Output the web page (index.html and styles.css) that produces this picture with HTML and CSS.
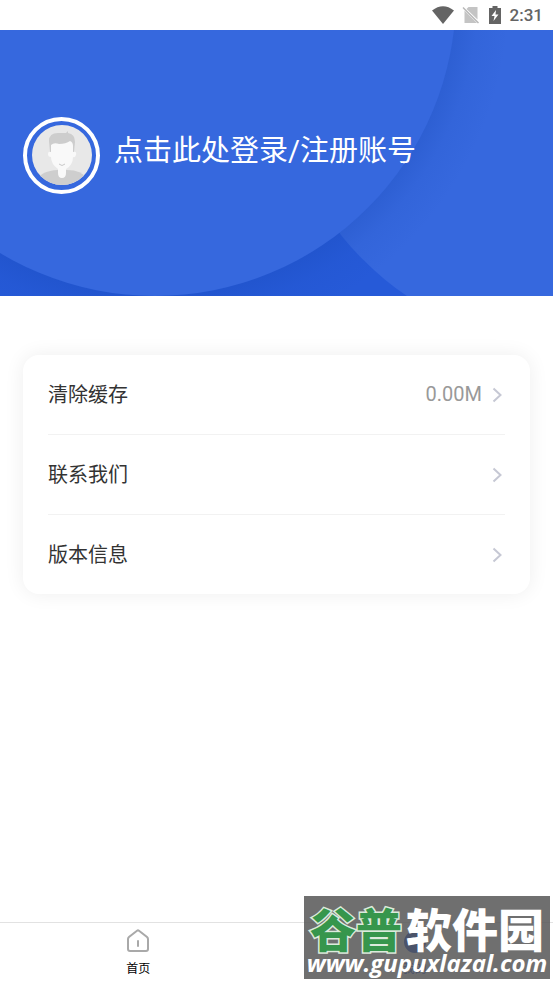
FILE: index.html
```
<!DOCTYPE html>
<html lang="zh-CN">
<head>
<meta charset="utf-8">
<meta name="viewport" content="width=device-width, initial-scale=1">
<title>我的</title>
<link rel="stylesheet" href="styles.css">
</head>
<body>
<div class="status">
  <svg class="status-icon" width="22" height="18" viewBox="0 0 22 18" aria-hidden="true"><path d="M0 4.500Q11-4 22 4.500L11 18Z" fill="#646464"/></svg>
  <svg class="status-icon" width="18" height="18" viewBox="0 0 18 18" aria-hidden="true"><path d="M6.500 1H15.500V13.500L4.500 3Z M2.500 4.500L15 17H2.500Z" fill="#c4c4c4"/><path d="M1 1.500L16.500 17" stroke="#b8b8b8" stroke-width="1.500"/></svg>
  <svg class="status-icon" width="14" height="18" viewBox="0 0 14 18" aria-hidden="true"><path d="M1 2h3.500V0h5v2H13v16H1Z" fill="#646464"/><path d="M8 4L3.500 10H6.500L5.500 15L10.500 8.500H7.500Z" fill="#fff"/></svg>
  <time>2:31</time>
</div>
<header class="hero">
  <svg class="hero-art" viewBox="0 0 553 266" preserveAspectRatio="xMidYMid slice" aria-hidden="true">
    <defs>
      <radialGradient id="shade" gradientUnits="userSpaceOnUse" cx="155" cy="-35" r="355">
        <stop offset=".84" stop-color="#1748b5" stop-opacity=".3"/>
        <stop offset=".91" stop-color="#1748b5" stop-opacity=".1"/>
        <stop offset="1" stop-color="#1748b5" stop-opacity="0"/>
      </radialGradient>
    </defs>
    <rect width="553" height="266" fill="#265ad8"/>
    <circle cx="576" cy="17" r="301" fill="#3668de"/>
    <circle cx="155" cy="-35" r="355" fill="url(#shade)"/>
    <circle cx="155" cy="-35" r="301" fill="#3668de"/>
  </svg>
  <a class="login" href="#login">
    <span class="avatar">
      <svg width="60" height="60" viewBox="0 0 60 60" aria-hidden="true">
        <defs><clipPath id="face"><circle cx="30" cy="30" r="30"/></clipPath></defs>
        <g clip-path="url(#face)">
          <rect width="60" height="60" fill="#e8e8e8"/>
          <path d="M6 54Q9 46 26 45H35Q50 45 55 54V60H6Z" fill="#cecece"/>
          <path d="M18 27L17 16Q17 8 26 8L34 8L36 6L36 8Q43 9 43 17L42 27Z" fill="#cdcdcd"/>
          <path d="M19 20Q22 17 27 19Q34 19 38 16Q41 17 41 21V27Q45 26 44 30Q43 33 41 32Q41 40 34 44V48Q34 53 30 53Q26 53 26 48V44Q19 39 19 32Q16 32 16 29Q16 26 19 27Z" fill="#f9f9f9"/>
          <path d="M27 39Q30 42 33 39" fill="none" stroke="#c8c8c8"/>
        </g>
      </svg>
    </span>
    <span>点击此处登录/注册账号</span>
  </a>
</header>
<main>
  <ul class="card">
    <li><a class="row" href="#cache"><span class="label">清除缓存</span><span class="value">0.00M</span><svg class="chevron" width="10" height="16" viewBox="0 0 10 16" aria-hidden="true"><path d="M1.500 1.500L8.500 8L1.500 14.500"/></svg></a></li>
    <li><a class="row" href="#contact"><span class="label">联系我们</span><svg class="chevron" width="10" height="16" viewBox="0 0 10 16" aria-hidden="true"><path d="M1.500 1.500L8.500 8L1.500 14.500"/></svg></a></li>
    <li><a class="row" href="#version"><span class="label">版本信息</span><svg class="chevron" width="10" height="16" viewBox="0 0 10 16" aria-hidden="true"><path d="M1.500 1.500L8.500 8L1.500 14.500"/></svg></a></li>
  </ul>
</main>
<nav class="tabs">
  <a class="tab" href="#home">
    <svg width="24" height="24" viewBox="0 0 24 24" aria-hidden="true"><path d="M2 10Q2 9 3 8L11 1.800Q12 1 13 1.800L21 8Q22 9 22 10V20Q22 22 20 22H4Q2 22 2 20Z" fill="none" stroke="#a9a9a9" stroke-width="2"/><path d="M12 12V17" stroke="#a9a9a9" stroke-width="2" stroke-linecap="round"/></svg>
    <span>首页</span>
  </a>
  <a class="tab active" href="#me">
    <svg width="24" height="24" viewBox="0 0 24 24" aria-hidden="true"><circle cx="12" cy="7" r="6" fill="#1f55d8"/><circle cx="12" cy="13" r="11" fill="#1f55d8"/></svg>
    <span>我的</span>
  </a>
</nav>
<div class="mark">
  <div class="mark-name"><span class="green">谷普</span><span class="white">软件园</span></div>
  <div class="mark-url">www.gupuxlazal.com</div>
</div>
</body>
</html>
```
FILE: styles.css
```
* { box-sizing: border-box; }

body {
  margin: 0;
  min-height: 100vh;
  display: flex;
  flex-direction: column;
  position: relative;
  background: #fff;
  color: #333;
  font-family: Roboto, "Noto Sans CJK SC", sans-serif;
}

a { color: inherit; text-decoration: none; }

.status {
  height: 30px;
  padding: 0 10px;
  display: flex;
  align-items: center;
  justify-content: flex-end;
  gap: 8px;
  color: #646464;
  font-size: 17px;
  font-weight: 500;
}

.hero {
  height: 266px;
  position: relative;
  display: flex;
  align-items: center;
  padding: 0 23px 16px;
  overflow: hidden;
}

.hero-art {
  position: absolute;
  inset: 0;
  width: 100%;
  height: 100%;
}

.login {
  position: relative;
  display: flex;
  align-items: center;
  gap: 14px;
  color: #fff;
  font-size: 29px;
  line-height: 40px;
}

.login > span:last-child { padding-bottom: 8px; }

.avatar {
  width: 77px;
  height: 77px;
  display: grid;
  place-items: center;
  border: 4px solid #fff;
  border-radius: 50%;
}

.avatar svg { display: block; }

main { flex: 1; padding: 59px 23px; }

.card {
  margin: 0;
  padding: 0 25px;
  list-style: none;
  background: #fff;
  border-radius: 16px;
  box-shadow: 0 0 20px rgba(0, 0, 0, .07);
}

.card li + li { border-top: 1px solid #f2f2f2; }

.row {
  height: 79px;
  display: flex;
  align-items: center;
  gap: 10px;
  padding-right: 3px;
  font-size: 20px;
}

.label,
.value { padding-bottom: 2px; }

.label { flex: 1; }
.value { color: #999; }

.chevron { fill: none; stroke: #c6c8d4; stroke-width: 2; }

.tabs {
  height: 61px;
  display: flex;
  border-top: 1px solid #e2e2e2;
  color: #000;
  font-size: 12px;
  line-height: 16px;
}

.tab {
  flex: 1;
  display: flex;
  flex-direction: column;
  align-items: center;
  gap: 8px;
  padding-top: 6px;
}

.active { color: #1f55d8; }

.mark {
  position: absolute;
  right: 3px;
  bottom: 4px;
  width: 246px;
  height: 83px;
  background: rgba(84, 84, 84, .84);
  color: #fff;
  white-space: nowrap;
}

.mark-name {
  display: flex;
  justify-content: center;
  gap: 4px;
  padding-top: 8px;
  font-family: "Noto Sans CJK SC", sans-serif;
  font-size: 46px;
  font-weight: 900;
  line-height: 46px;
}

.green {
  color: #36964c;
  paint-order: stroke fill;
  -webkit-text-stroke: 3px #dcebdc;
}

.white { font-style: oblique 8deg; }

.mark-url {
  font-family: "Open Sans", sans-serif;
  font-size: 24px;
  font-style: italic;
  font-weight: 700;
  line-height: 26px;
  text-align: center;
}
```
